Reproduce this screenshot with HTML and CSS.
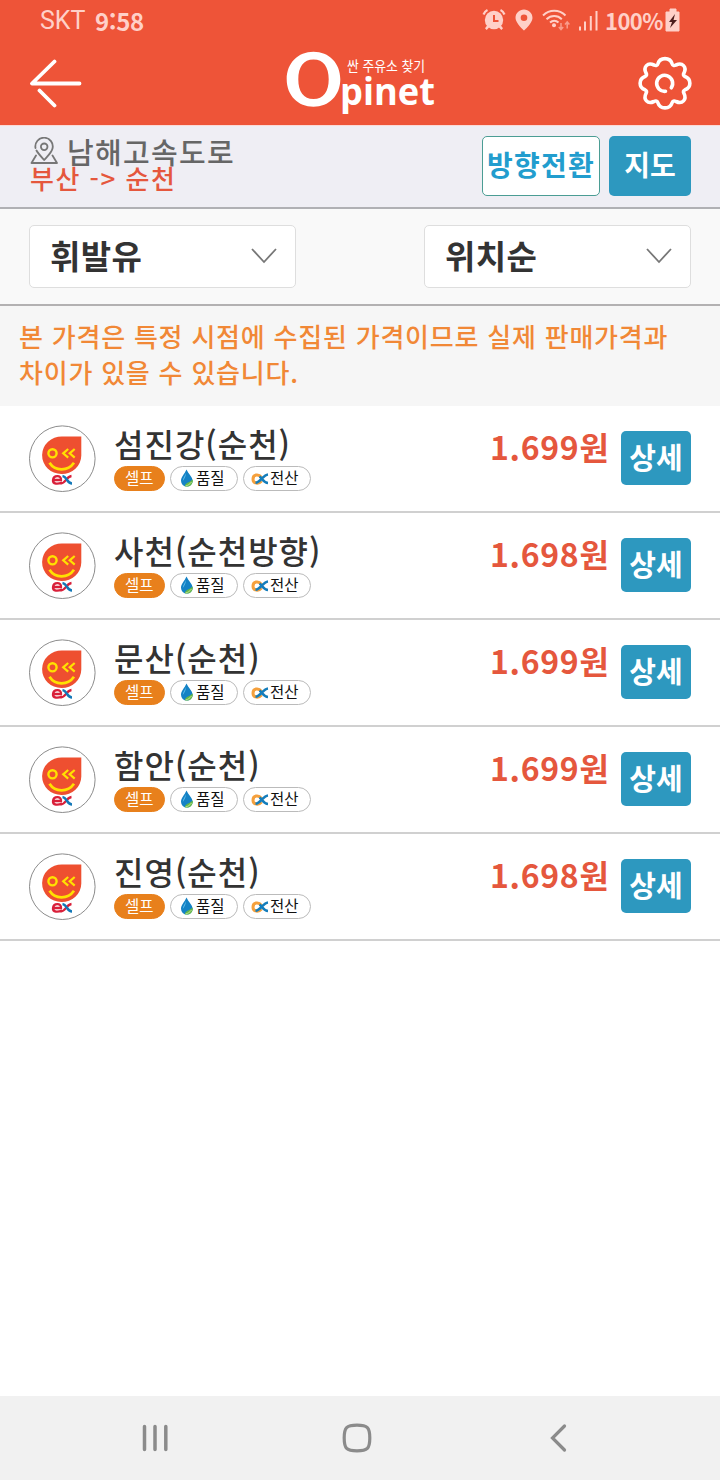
FILE: index.html
```html
<!DOCTYPE html>
<html lang="ko">
<head>
<meta charset="utf-8">
<title>Opinet</title>
<link rel="stylesheet" href="styles.css">
</head>
<body>
<svg class="defs" width="0" height="0" aria-hidden="true">
  <symbol id="ex" viewBox="0 0 68 68">
    <circle cx="34.300" cy="33.700" r="32.800" fill="#fff" stroke="#8c8c8c" stroke-width="1"/>
    <path d="M34 11.500H53.300V30.500A19.600 18.800 0 1 1 34 11.500Z" fill="#ee4f30"/>
    <circle cx="24.500" cy="28.300" r="4.100" fill="none" stroke="#ffe100" stroke-width="2.400"/>
    <path d="M40.200 24l-5 4.300 5 4.300M46.700 24l-5 4.300 5 4.300" fill="none" stroke="#ffe100" stroke-width="2.200"/>
    <path d="M21.500 37.800C27 46.500 40 46.500 46 37.800" fill="none" stroke="#ffe100" stroke-width="2.700"/>
    <path d="M25 55H33C33.500 49.500 25.500 50 25 55C24.500 59.500 30 59 34 57.700" fill="none" stroke="#d9203a" stroke-width="2.300"/>
    <path d="M43.500 51C38 51.500 38 58.500 32.500 58.500" fill="none" stroke="#d9203a" stroke-width="2.300"/>
    <path d="M34.500 51C39 51.500 39 58.500 44 58.500" fill="none" stroke="#1378b8" stroke-width="2.500"/>
  </symbol>
  <symbol id="drop" viewBox="0 0 14 18">
    <path d="M6.500 .5C4.500 5 1 8 1 11.800A5.800 5.800 0 0 0 12.600 11.800C12.600 8 8.500 5 6.500 .5Z" fill="#1482c5"/>
    <path d="M5.800 4C5 7.500 2.700 9 2.800 12C4 10 6 8 5.800 4Z" fill="#5cbcea"/>
    <path d="M5 17.500C4.500 14 9 14 12.700 10.500C13.500 15 10 18.300 5 17.500Z" fill="#65b847"/>
    <path d="M5.500 17C8 16.500 10 15 11.500 13" fill="none" stroke="#d3eaa8" stroke-width=".8"/>
  </symbol>
  <symbol id="alpha" viewBox="0 0 18 12">
    <path d="M10.500 8C7.500 11.500 2 10.500 2 6.200C2 1.500 7.500 .5 10.500 4.500" fill="none" stroke="#f5a03c" stroke-width="3"/>
    <path d="M17 1.500C12 2 9.500 9.500 4.500 9.800M8.500 3.500C11 5 12.500 9.800 17 10" fill="none" stroke="#147dbb" stroke-width="2.600"/>
  </symbol>
</svg>

<div class="screen">
  <header class="header">
    <div class="status">
      <span class="carrier">SKT</span><span class="clock">9:58</span>
      <svg class="status-icons" width="118" height="26" viewBox="0 0 118 26">
        <g fill="#ffd0c8">
          <circle cx="12" cy="14" r="9.200"/>
          <path d="M5.500 19l2 2-2.800 3-1.700-1.700zM18.500 19l-2 2 2.800 3 1.700-1.700z"/>
          <path d="M42 3.500c-4.700 0-8.500 3.700-8.500 8.400 0 5 8.500 12.600 8.500 12.600s8.500-7.600 8.500-12.600C50.500 7.200 46.700 3.500 42 3.500zm0 5a3.300 3.300 0 1 1 0 6.600 3.300 3.300 0 0 1 0-6.600z" fill-rule="evenodd"/>
          <circle cx="72" cy="19.300" r="2"/>
          <path d="M97 20.500h2v4h-2zM102 15.500h2v9h-2zM107.800 10h2v14.500h-2zM113.500 5h2v19.500h-2z"/>
        </g>
        <path d="M12 9v6h4.500" fill="none" stroke="#ee5438" stroke-width="2"/>
        <path d="M1.500 8.500C2.300 6.500 3.500 5 5.500 4M22.500 8.500C21.700 6.500 20.500 5 18.500 4" fill="none" stroke="#ffd0c8" stroke-width="2.200"/>
        <path d="M61 9.500C67.500 3.200 77 3.200 83.500 9.500M64.500 13.200C69 9 75.500 9 79.800 13.200M68 16.500C70.500 14.300 74 14.300 76.500 16.500" fill="none" stroke="#ffd0c8" stroke-width="2"/>
        <path d="M79 17v6.500M76.800 21l2.200 2.500 2.200-2.500M85.200 22.500V16M83 18.500l2.200-2.500 2.200 2.500" fill="none" stroke="#f99c8b" stroke-width="1.500"/>
      </svg>
      <span class="percent">100%</span>
      <svg class="battery" width="16" height="24" viewBox="0 0 16 24">
        <path d="M5 1h6v3h3v19H1V4h4z" fill="#ffd0c8" stroke="#ffd0c8"/>
        <path d="M10 6L4 14h3l-2 6 7-8H8.500z" fill="#4b1c1c"/>
      </svg>
    </div>
    <div class="titlebar">
      <svg class="back" width="54" height="50" viewBox="0 0 54 50" fill="none" stroke="#fff" stroke-width="3.800" stroke-linecap="round" stroke-linejoin="round">
        <path d="M25.500 3.500L3 25.500H50.500M10.500 32.500L25.500 47.500"/>
      </svg>
      <svg class="logo" width="156" height="66" viewBox="0 0 156 66">
        <path d="M29.500 2.800C45 2.800 56.300 14 56.300 30.300S45 57.800 29.500 57.800 2.700 46.600 2.700 30.300 14 2.800 29.500 2.800ZM29.500 10.500C19.500 10.500 14.300 18 14.300 30.300S19.500 50.100 29.500 50.100 44.700 42.600 44.700 30.300 39.500 10.500 29.500 10.500Z" fill="#fff" fill-rule="evenodd"/>
        <text class="logo-small" x="63" y="22" textLength="78" lengthAdjust="spacingAndGlyphs">싼 주유소 찾기</text>
        <text class="logo-big" x="56" y="56" textLength="95" lengthAdjust="spacingAndGlyphs">pinet</text>
      </svg>
      <svg class="gear" width="54" height="54" viewBox="0 0 54 54" fill="none" stroke="#fff" stroke-width="3.600" stroke-linecap="round" stroke-linejoin="round">
        <path d="M20 7.500C22 1 32 1 34 7.500Q35 10.500 38 9C44.500 6 49 11 46 17Q44.500 19.500 47 20.500C53.500 23 53.500 31.500 47 33.800Q44.500 35 46 37.500C49 43.500 44.500 48.500 38 45.500Q35 44 34 47C32 53.500 22 53.500 20 47Q19 44 16 45.500C9.500 48.500 5 43.500 8 37.500Q9.500 35 7 33.800C.5 31.500 .5 23 7 20.500Q9.500 19.500 8 17C5 11 9.500 6 16 9Q19 10.500 20 7.500Z"/>
        <path d="M27.500 35.300A8 8 0 1 1 33.300 31.800"/>
      </svg>
    </div>
  </header>

  <section class="route">
    <div class="route-text">
      <div class="road">
        <svg width="28" height="29" viewBox="0 0 28 29" fill="none" stroke="#777" stroke-width="1.800" stroke-linecap="round" stroke-linejoin="round">
          <path d="M5.500 11A8.700 8.700 0 1 1 22.500 11.500C21.500 16 17 19.500 14.200 23C11.500 20 8 16.500 6.500 13.500M6 18.500L1.500 26H27L22.500 18.500"/>
          <circle cx="14.200" cy="9.800" r="3.300"/>
        </svg>
        <span>남해고속도로</span>
      </div>
      <div class="direction">부산 -&gt; 순천</div>
    </div>
    <button class="btn btn-turn">방향전환</button>
    <button class="btn btn-map">지도</button>
  </section>

  <section class="filters">
    <div class="select"><span>휘발유</span>
      <svg width="28" height="18" viewBox="0 0 28 18"><path d="M2 2l12 13L26 2" fill="none" stroke="#777" stroke-width="1.800"/></svg></div>
    <div class="select"><span>위치순</span>
      <svg width="28" height="18" viewBox="0 0 28 18"><path d="M2 2l12 13L26 2" fill="none" stroke="#777" stroke-width="1.800"/></svg></div>
  </section>

  <p class="notice">본 가격은 특정 시점에 수집된 가격이므로 실제 판매가격과<br>차이가 있을 수 있습니다.</p>

  <ul class="list">
    <li class="row">
      <svg class="brand"><use href="#ex"/></svg>
      <div class="info"><div class="name">섬진강(순천)</div>
        <div class="tags"><span class="tag self">셀프</span><span class="tag"><svg class="drop"><use href="#drop"/></svg>품질</span><span class="tag"><svg class="alpha"><use href="#alpha"/></svg>전산</span></div></div>
      <div class="price">1.699원</div><button class="btn detail">상세</button>
    </li>
    <li class="row">
      <svg class="brand"><use href="#ex"/></svg>
      <div class="info"><div class="name">사천(순천방향)</div>
        <div class="tags"><span class="tag self">셀프</span><span class="tag"><svg class="drop"><use href="#drop"/></svg>품질</span><span class="tag"><svg class="alpha"><use href="#alpha"/></svg>전산</span></div></div>
      <div class="price">1.698원</div><button class="btn detail">상세</button>
    </li>
    <li class="row">
      <svg class="brand"><use href="#ex"/></svg>
      <div class="info"><div class="name">문산(순천)</div>
        <div class="tags"><span class="tag self">셀프</span><span class="tag"><svg class="drop"><use href="#drop"/></svg>품질</span><span class="tag"><svg class="alpha"><use href="#alpha"/></svg>전산</span></div></div>
      <div class="price">1.699원</div><button class="btn detail">상세</button>
    </li>
    <li class="row">
      <svg class="brand"><use href="#ex"/></svg>
      <div class="info"><div class="name">함안(순천)</div>
        <div class="tags"><span class="tag self">셀프</span><span class="tag"><svg class="drop"><use href="#drop"/></svg>품질</span><span class="tag"><svg class="alpha"><use href="#alpha"/></svg>전산</span></div></div>
      <div class="price">1.699원</div><button class="btn detail">상세</button>
    </li>
    <li class="row">
      <svg class="brand"><use href="#ex"/></svg>
      <div class="info"><div class="name">진영(순천)</div>
        <div class="tags"><span class="tag self">셀프</span><span class="tag"><svg class="drop"><use href="#drop"/></svg>품질</span><span class="tag"><svg class="alpha"><use href="#alpha"/></svg>전산</span></div></div>
      <div class="price">1.698원</div><button class="btn detail">상세</button>
    </li>
  </ul>

  <nav class="navbar">
    <svg width="30" height="30" viewBox="0 0 30 30"><path d="M4.500 3.500v23M15 3.500v23M25.800 3.500v23" stroke="#8b8b8b" stroke-width="3.500" stroke-linecap="round"/></svg>
    <svg width="30" height="30" viewBox="0 0 30 30"><path d="M15 2.200C25.500 2.200 27.800 4.500 27.800 15S25.500 27.800 15 27.800 2.200 25.500 2.200 15 4.500 2.200 15 2.200Z" fill="none" stroke="#8b8b8b" stroke-width="3.200"/></svg>
    <svg width="30" height="30" viewBox="0 0 30 30"><path d="M21.500 3L9.500 15l12 12" fill="none" stroke="#8b8b8b" stroke-width="3.200" stroke-linecap="round"/></svg>
  </nav>
</div>
</body>
</html>
```
FILE: styles.css
```css
* { box-sizing: border-box; }
body {
  margin: 0;
  background: #fff;
  font-family: "Noto Sans CJK KR", sans-serif;
}
svg { display: block; flex: none; }
.defs { position: absolute; }
.screen {
  width: 720px;
  height: 1480px;
  display: flex;
  flex-direction: column;
  white-space: nowrap;
  overflow: hidden;
}

/* header */
.header { height: 125px; background: #ee5438; flex: none; }
.status {
  height: 42px;
  padding: 0 39px 0 40px;
  display: flex;
  align-items: center;
  color: #ffd0c8;
  line-height: 42px;
}
.carrier { font: 25px/46px Roboto, sans-serif; width: 55px; }
.clock { font-size: 24px; font-weight: 700; letter-spacing: -0.4px; line-height: 40px; flex: 1; }
.status-icons { margin-right: 5px; margin-bottom: 4px; }
.percent { font-size: 22px; font-weight: 700; letter-spacing: -0.6px; width: 60px; line-height: 36px; padding-bottom: 3px; }
.battery { margin-bottom: 3px; }
.titlebar {
  height: 83px;
  padding: 0 28px 2px 29px;
  display: flex;
  justify-content: space-between;
  align-items: center;
}
.logo { margin-left: 3px; margin-bottom: 1px; }
.logo-small { font-size: 14px; fill: #fff; }
.logo-big { font-family: "Open Sans", sans-serif; font-size: 37px; font-weight: 700; fill: #fff; }

/* route bar */
.route {
  height: 84px;
  flex: none;
  display: flex;
  padding: 11px 29px 0 30px;
  background: #efeef4;
  border-top: 1px solid #fbdad6;
  border-bottom: 2px solid #b0b0b4;
}
.route-text { flex: 1; }
.road { display: flex; height: 28px; color: #666; }
.road span { font-size: 29px; line-height: 28px; font-weight: 500; letter-spacing: 1.3px; margin-left: 9px; }
.direction { color: #e5573d; font-size: 26px; font-weight: 500; line-height: 26px; letter-spacing: 1.5px; }
.btn {
  border: 0;
  padding: 0;
  border-radius: 5px;
  background: #2d98bf;
  color: #fff;
  font-family: inherit;
  font-weight: 700;
  text-align: center;
}
.route .btn { height: 60px; margin-top: -1px; }
.btn-turn { width: 118px; font-size: 28px; letter-spacing: 1.2px; line-height: 52px; padding-bottom: 4px; }
.route .btn-turn { background: #fff; color: #229dce; border: 1px solid #4b9d94; margin-right: 9px; }
.btn-map { width: 82px; font-size: 28px; padding-bottom: 4px; }

/* filters */
.filters {
  height: 97px;
  flex: none;
  display: flex;
  justify-content: space-between;
  padding: 16px 29px 0;
  background: #f9f9f9;
  border-bottom: 2px solid #b3b1b2;
}
.select {
  width: 267px;
  height: 63px;
  display: flex;
  align-items: center;
  justify-content: space-between;
  padding: 0 17px 1px 20px;
  background: #fff;
  border: 1px solid #dedede;
  border-radius: 5px;
  color: #333;
  font-size: 33px;
  font-weight: 700;
  line-height: 56px;
}
.select span { padding-bottom: 3px; letter-spacing: 0.4px; }

.notice {
  height: 100px;
  flex: none;
  margin: 0;
  padding: 12px 19px 0;
  background: #f6f6f6;
  color: #f18836;
  font-size: 26px;
  font-weight: 500;
  line-height: 36px;
  letter-spacing: 0.78px;
}

/* stations */
.list { list-style: none; margin: 0; padding: 0; flex: 1; }
.row {
  height: 107px;
  display: flex;
  padding: 0 29px 0 28px;
  border-bottom: 2px solid #d0d0d0;
}
.brand { width: 68px; height: 68px; margin-top: 19px; }
.info { margin-left: 18px; flex: 1; }
.name { height: 43px; margin-top: 17px; font-size: 32px; line-height: 41px; font-weight: 500; color: #333; letter-spacing: 1px; }
.tags { display: flex; gap: 5px; }
.tag {
  height: 25px;
  width: 68px;
  display: flex;
  align-items: center;
  padding: 0 0 2px 9px;
  border: 1px solid #bbb;
  border-radius: 13px;
  color: #111;
  font-size: 15.5px;
  line-height: 21px;
}
.self { width: 51px; padding-left: 10px; background: #e8801c; border-color: #e8801c; color: #fff; }
.drop { width: 14px; height: 18px; margin-right: 2px; }
.alpha { width: 18px; height: 12px; margin: 2px 1px 0 -2px; }
.price { width: 131px; margin-top: 19px; font-size: 32px; line-height: 42px; font-weight: 700; color: #e5573d; letter-spacing: 0.7px; }
.detail { width: 70px; height: 54px; margin-top: 25px; font-size: 29px; line-height: 48px; padding-bottom: 5px; }

/* system navigation */
.navbar {
  height: 84px;
  flex: none;
  display: flex;
  align-items: center;
  justify-content: space-between;
  padding: 0 147px 1px 140px;
  background: #f1f1f1;
}
```
